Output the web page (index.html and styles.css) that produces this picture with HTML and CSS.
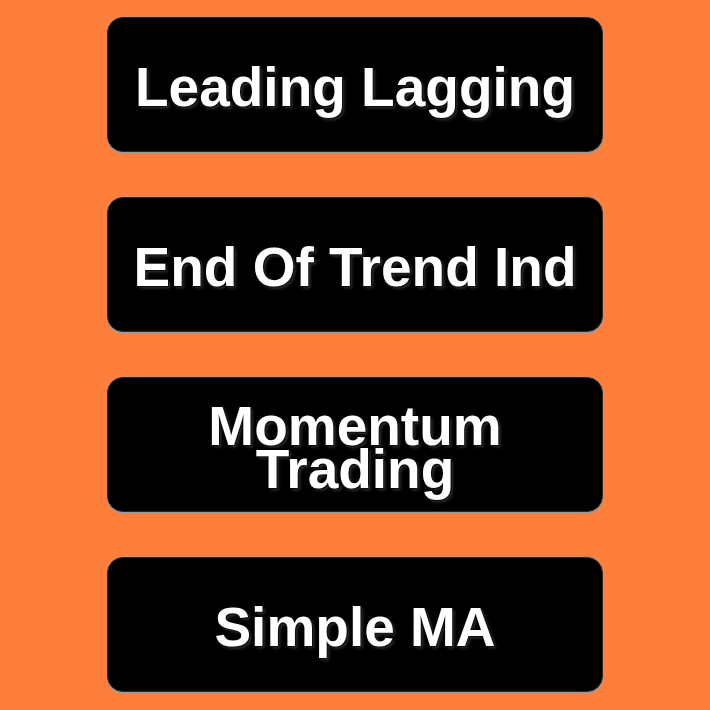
FILE: index.html
```html
<!DOCTYPE html>
<html>
<head>
<meta charset="utf-8">
<link rel="stylesheet" href="styles.css">
</head>
<body>
<div class="menu">
  <div class="btn"><span>Leading Lagging</span></div>
  <div class="btn"><span>End Of Trend Ind</span></div>
  <div class="btn"><span>Momentum<br>Trading</span></div>
  <div class="btn"><span>Simple MA</span></div>
</div>
</body>
</html>
```
FILE: styles.css
```css
html, body {
  margin: 0;
  padding: 0;
  background: #fe7f3b;
}
body {
  width: 710px;
  height: 710px;
  overflow: hidden;
}
.menu {
  display: flex;
  flex-direction: column;
  align-items: center;
  gap: 45px;
  padding-top: 17px;
}
.btn {
  box-sizing: border-box;
  width: 496px;
  height: 135px;
  padding-top: 6px;
  background: #000;
  border: 1px solid #2a2a2a;
  border-radius: 16px;
  box-shadow: 0 2px 0 #9a9a9a;
  display: flex;
  align-items: center;
  justify-content: center;
  text-align: center;
}
.btn span {
  font-family: "Liberation Sans", Arial, sans-serif;
  font-weight: bold;
  font-size: 55px;
  line-height: 43px;
  color: #fff;
  text-shadow: 1px 1px 2px #000, -1px -1px 2px #000, 2px 2px 3px #444;
}
```
